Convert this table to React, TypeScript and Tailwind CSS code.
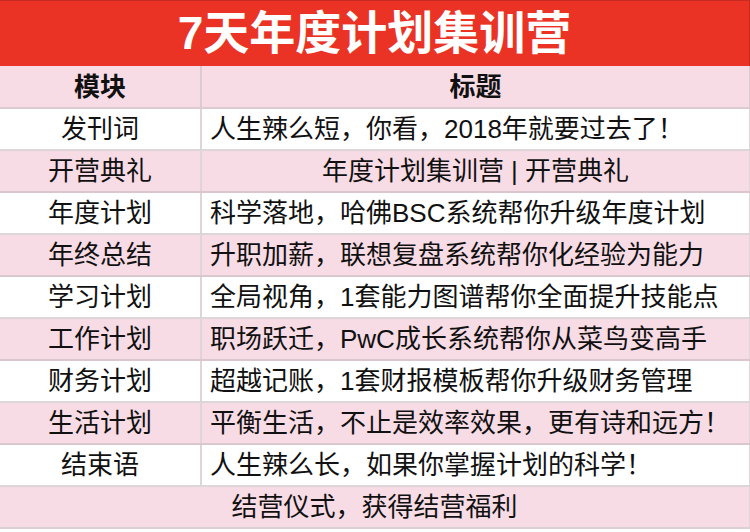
const rows: { mod: string; title: string; center?: boolean; pink: boolean }[] = [
  { mod: '发刊词', title: '人生辣么短，你看，2018年就要过去了！', pink: false },
  { mod: '开营典礼', title: '年度计划集训营 | 开营典礼', center: true, pink: true },
  { mod: '年度计划', title: '科学落地，哈佛BSC系统帮你升级年度计划', pink: false },
  { mod: '年终总结', title: '升职加薪，联想复盘系统帮你化经验为能力', pink: true },
  { mod: '学习计划', title: '全局视角，1套能力图谱帮你全面提升技能点', pink: false },
  { mod: '工作计划', title: '职场跃迁，PwC成长系统帮你从菜鸟变高手', pink: true },
  { mod: '财务计划', title: '超越记账，1套财报模板帮你升级财务管理', pink: false },
  { mod: '生活计划', title: '平衡生活，不止是效率效果，更有诗和远方！', pink: true },
  { mod: '结束语', title: '人生辣么长，如果你掌握计划的科学！', pink: false },
];

export default function App() {
  return (
    <div
      className="w-[750px] h-[532px] overflow-hidden bg-white text-[#111]"
      style={{ fontFamily: '"Liberation Sans", "Noto Sans CJK SC", sans-serif' }}
    >
      <div className="h-[66px] bg-[#ea3324] border-t border-[#c42c22] border-r border-r-[#c42c22] flex items-center justify-center text-white font-bold text-[46px] leading-none pb-[2px]">
        7天年度计划集训营
      </div>

      <div className="flex h-[43px] bg-[#f8dce5] border-b-2 border-[#dccbd1] text-[26px] font-bold leading-none">
        <div className="w-[202px] shrink-0 flex items-center justify-center border-r-2 border-[#dccbd1]">模块</div>
        <div className="flex-1 flex items-center justify-center border-r border-[#dccbd1]">标题</div>
      </div>

      {rows.map((r) => (
        <div
          key={r.mod}
          className={`flex h-[42px] border-b-2 text-[26px] leading-none ${
            r.pink ? 'bg-[#f8dce5] border-[#dcc6cd]' : 'bg-white border-[#dcd6d8]'
          }`}
        >
          <div className="w-[202px] shrink-0 flex items-center justify-center border-r-2 border-[#ddd5d8] pb-[1px]">
            {r.mod}
          </div>
          <div
            className={`flex-1 flex items-center border-r border-[#ddd5d8] pb-[1px] ${
              r.center ? 'justify-center' : 'pl-[8px]'
            }`}
          >
            {r.title}
          </div>
        </div>
      ))}

      <div className="flex h-[42px] items-center justify-center bg-[#f8dce5] border-b-2 border-[#dcd0d4] border-r border-r-[#ddd5d8] text-[26px] leading-none pb-[1px]">
        结营仪式，获得结营福利
      </div>
      <div className="h-[10px] bg-white" />
    </div>
  );
}
